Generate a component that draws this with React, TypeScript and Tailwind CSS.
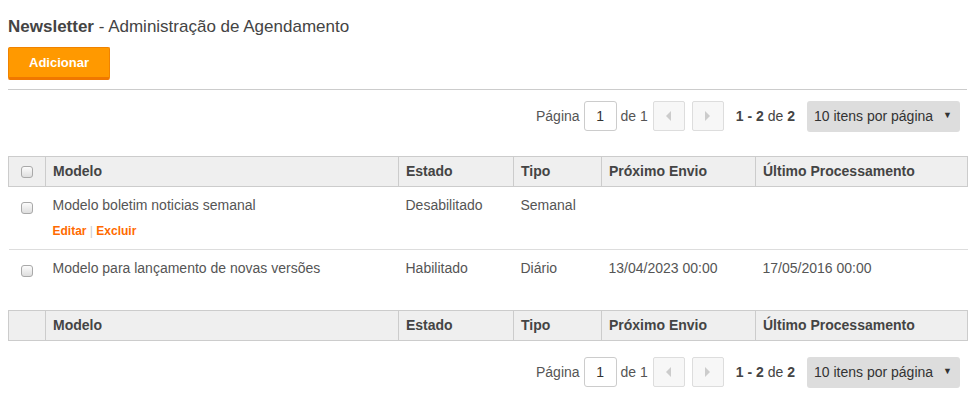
import React from "react"

function Check() {
  return (
    <span className="inline-block w-[12px] h-[12px] rounded-[3px] border border-[#a9a9a9] bg-gradient-to-b from-[#fcfcfc] to-[#dedede] align-middle" />
  )
}

function Pager() {
  return (
    <div className="flex justify-end items-center h-[30px] pr-[7px] text-[14px] text-[#555]">
      <span>Página</span>
      <div className="ml-[4px] w-[33px] h-[30px] border border-[#ccc] rounded-[3px] bg-white flex items-center justify-center text-[#333]">1</div>
      <span className="ml-[4px]">de 1</span>
      <div className="ml-[5px] w-[32px] h-[30px] border border-[#ddd] rounded-[2px] bg-[#f7f7f7] flex items-center justify-center">
        <span className="w-0 h-0 border-y-[5px] border-y-transparent border-r-[5px] border-r-[#ccc]" />
      </div>
      <div className="ml-[7px] w-[32px] h-[30px] border border-[#ddd] rounded-[2px] bg-[#f7f7f7] flex items-center justify-center">
        <span className="w-0 h-0 border-y-[5px] border-y-transparent border-l-[5px] border-l-[#ccc]" />
      </div>
      <span className="ml-[12px] text-[#444]">
        <b>1 - 2</b> de <b>2</b>
      </span>
      <div className="ml-[12px] w-[153px] h-[31px] rounded-[3px] bg-[#ddd] flex items-center justify-between pl-[7px] pr-[8px] text-[#333]">
        <span>10 itens por página</span>
        <span className="text-[9px]">▼</span>
      </div>
    </div>
  )
}

const head = ["Modelo", "Estado", "Tipo", "Próximo Envio", "Último Processamento"]

function HeadRow({ box }: { box: boolean }) {
  return (
    <tr className="bg-[#efefef] h-[30px]">
      <th className="border border-[#ccc] w-[37px] text-center">{box && <Check />}</th>
      {head.map((h) => (
        <th key={h} className="border border-[#ccc] text-left pl-[7px] font-bold text-[#444]">{h}</th>
      ))}
    </tr>
  )
}

export default function App() {
  const rows = [
    ["Modelo boletim noticias semanal", "Desabilitado", "Semanal", "", ""],
    ["Modelo para lançamento de novas versões", "Habilitado", "Diário", "13/04/2023 00:00", "17/05/2016 00:00"],
  ]
  return (
    <div className="px-[8px] pt-[15px] font-['Liberation_Sans',Arial,sans-serif] text-[14px] text-[#444] bg-white min-h-[417px]">
      <h1 className="text-[17px] leading-[24px] text-[#444]">
        <b>Newsletter</b> - Administração de Agendamento
      </h1>
      <button className="mt-[8px] w-[102px] h-[33px] bg-[#ff9900] border border-[#f08300] border-b-[3px] border-b-[#f07800] rounded-[2px] text-white font-bold text-[13px]">
        Adicionar
      </button>
      <hr className="mt-[9px] border-t border-[#ccc]" />
      <div className="mt-[11px] mb-[25px]">
        <Pager />
      </div>
      <table className="w-[959px] border-collapse table-fixed">
        <colgroup>
          <col className="w-[37px]" />
          <col className="w-[353px]" />
          <col className="w-[115px]" />
          <col className="w-[88px]" />
          <col className="w-[154px]" />
          <col className="w-[212px]" />
        </colgroup>
        <thead>
          <HeadRow box />
        </thead>
        <tbody>
          {rows.map((r, i) => (
            <tr key={i} className={i === 0 ? "border-b border-[#ddd] h-[63px] align-top" : "h-[61px] align-top"}>
              <td className="text-center pt-[10px]"><Check /></td>
              <td className="pl-[7px] pt-[9px] text-[#555]">
                <div className="leading-[18px]">{r[0]}</div>
                {i === 0 && (
                  <div className="mt-[10px] text-[12px] font-bold text-[#ff6a00] leading-[14px]">
                    Editar <span className="text-[#ccc] font-normal">|</span> Excluir
                  </div>
                )}
              </td>
              {r.slice(1).map((c, j) => (
                <td key={j} className="pl-[7px] pt-[9px] leading-[18px] text-[#555]">{c}</td>
              ))}
            </tr>
          ))}
        </tbody>
        <tfoot>
          <HeadRow box={false} />
        </tfoot>
      </table>
      <div className="mt-[16px]">
        <Pager />
      </div>
    </div>
  )
}
